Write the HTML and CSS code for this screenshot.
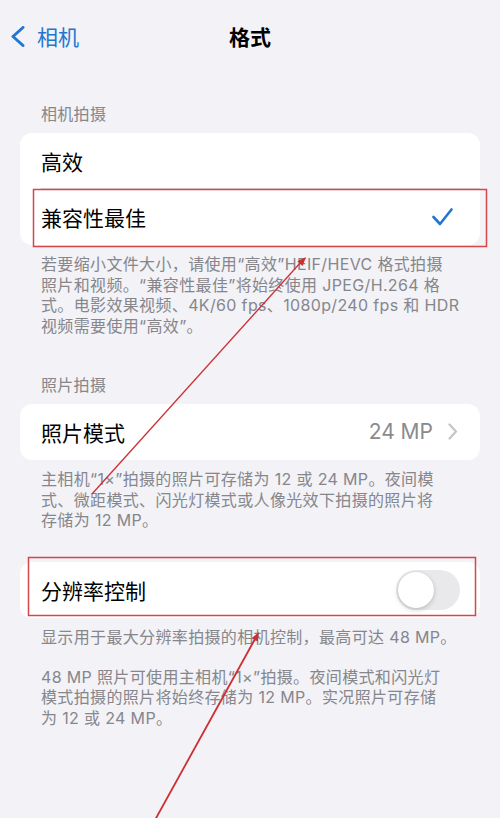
FILE: index.html
```html
<!DOCTYPE html>
<html lang="zh">
<head>
<meta charset="utf-8">
<title>格式</title>
<link rel="stylesheet" href="styles.css">
</head>
<body>
<div class="page">
  <header class="nav">
    <div class="back">
      <svg class="back-chev" width="14" height="21" viewBox="0 0 14 21"><path d="M12 1.5 L2 10.5 L12 19.5" fill="none" stroke="currentColor" stroke-width="3" stroke-linecap="round" stroke-linejoin="round"/></svg>
      <span>相机</span>
    </div>
    <div class="title">格式</div>
    <div></div>
  </header>

  <div class="section-header first">相机拍摄</div>
  <div class="card">
    <div class="row sep">高效</div>
    <div class="row">
      <span>兼容性最佳</span>
      <svg class="check" width="21" height="18" viewBox="0 0 21 18"><path d="M1.5 9 L8 16 L19.5 1.5" fill="none" stroke="currentColor" stroke-width="2.6" stroke-linecap="round" stroke-linejoin="round"/></svg>
    </div>
  </div>
  <div class="footer">若要缩小文件大小，请使用“高效”HEIF/HEVC 格式拍摄<br>照片和视频。“兼容性最佳”将始终使用 JPEG/H.264 格<br>式。电影效果视频、4K/60 fps、1080p/240 fps 和 HDR<br>视频需要使用“高效”。</div>

  <div class="section-header second">照片拍摄</div>
  <div class="card">
    <div class="row value-row">
      <span>照片模式</span>
      <span class="value">24 MP<svg class="chev" width="10" height="17" viewBox="0 0 10 17"><path d="M1.5 1.5 L8 8.5 L1.5 15.5" fill="none" stroke="currentColor" stroke-width="2.2" stroke-linecap="round" stroke-linejoin="round"/></svg></span>
    </div>
  </div>
  <div class="footer">主相机“1×”拍摄的照片可存储为 12 或 24 MP。夜间模<br>式、微距模式、闪光灯模式或人像光效下拍摄的照片将<br>存储为 12 MP。</div>

  <div class="card third">
    <div class="row toggle-row">
      <span>分辨率控制</span>
      <span class="toggle"><span class="knob"></span></span>
    </div>
  </div>
  <div class="footer">显示用于最大分辨率拍摄的相机控制，最高可达 48 MP。</div>
  <div class="footer para">48 MP 照片可使用主相机“1×”拍摄。夜间模式和闪光灯<br>模式拍摄的照片将始终存储为 12 MP。实况照片可存储<br>为 12 或 24 MP。</div>

  <svg class="annot" width="500" height="818" viewBox="0 0 500 818">
    <rect x="33.5" y="189.5" width="453" height="57" fill="none" stroke="#d6454b" stroke-width="1.5"/>
    <rect x="28.5" y="557.5" width="447" height="58" fill="none" stroke="#d6454b" stroke-width="1.5"/>
    <line x1="92" y1="494" x2="301" y2="262" stroke="#cc2f33" stroke-width="1.3"/>
    <polygon points="306,257 302.6,266 297.4,261.3" fill="#cc2f33"/>
    <line x1="155" y1="820" x2="255" y2="639" stroke="#cc2f33" stroke-width="1.8"/>
    <polygon points="259,632 257.7,641.6 251.6,638.2" fill="#cc2f33"/>
  </svg>
</div>
</body>
</html>
```

FILE: styles.css
```css
html, body {
  margin: 0;
  padding: 0;
}
body {
  background: #f2f2f7;
  font-family: Inter, "Noto Sans CJK SC", sans-serif;
  color: #000;
}
.page {
  position: relative;
  width: 500px;
  height: 818px;
  overflow: hidden;
}
.nav {
  height: 72px;
  display: grid;
  grid-template-columns: 1fr auto 1fr;
  align-items: center;
}
.back {
  display: flex;
  align-items: center;
  gap: 12px;
  padding-left: 11px;
  color: #2276d2;
  font-size: 21px;
}
.back-chev {
  display: block;
}
.title {
  font-size: 21px;
  font-weight: 700;
}
.section-header {
  padding: 0 41px;
  font-size: 16px;
  line-height: 20px;
  color: #86868b;
  margin-bottom: 9px;
  letter-spacing: 0.3px;
}
.section-header.first {
  margin-top: 32px;
}
.section-header.second {
  margin-top: 38px;
}
.card {
  margin: 0 20px;
  background: #fff;
  border-radius: 12px;
  overflow: hidden;
}
.card.third {
  margin-top: 31px;
}
.row {
  height: 56px;
  display: flex;
  align-items: center;
  justify-content: space-between;
  padding: 0 21px;
  font-size: 21px;
  box-sizing: border-box;
  position: relative;
}
.row.sep::after {
  content: "";
  position: absolute;
  left: 21px;
  right: 0;
  bottom: 0;
  height: 1px;
  background: #dcdce0;
}
.check {
  color: #2276d2;
  margin-right: 6px;
  display: block;
}
.value-row {
  padding-right: 22px;
}
.value {
  display: flex;
  align-items: center;
  gap: 15px;
  color: #8a8a8e;
}
.chev {
  color: #c4c4c8;
  display: block;
}
.toggle-row {
  padding-right: 20px;
}
.toggle {
  width: 64px;
  height: 40px;
  border-radius: 20px;
  background: #e9e9eb;
  position: relative;
  box-sizing: border-box;
}
.knob {
  position: absolute;
  left: 2px;
  top: 2px;
  width: 36px;
  height: 36px;
  border-radius: 50%;
  background: #fff;
  box-shadow: 0 2px 5px rgba(0,0,0,0.18), 0 0 1px rgba(0,0,0,0.15);
}
.footer {
  padding: 9px 41px 0;
  font-size: 16px;
  line-height: 20.7px;
  color: #86868b;
  white-space: nowrap;
  letter-spacing: 0.35px;
}
.footer.para {
  padding-top: 19px;
}
.annot {
  position: absolute;
  left: 0;
  top: 0;
  pointer-events: none;
}
```
